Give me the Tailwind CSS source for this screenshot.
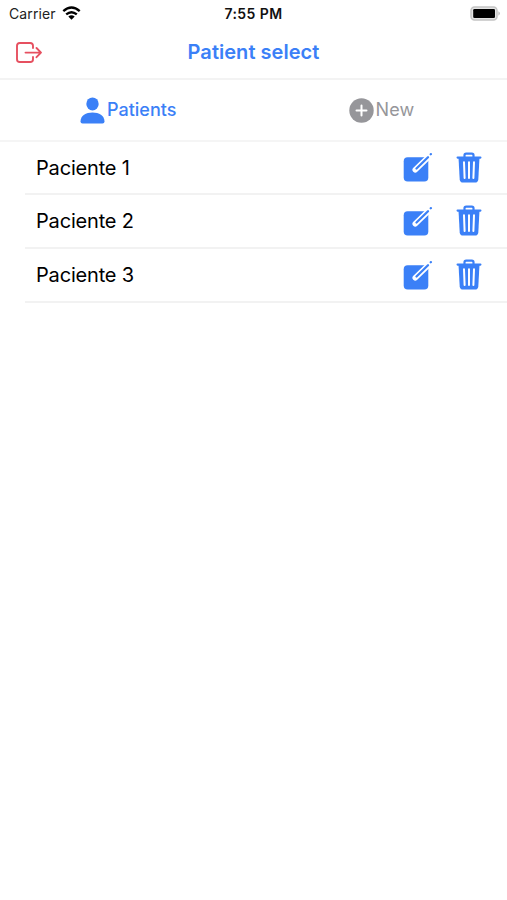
<!DOCTYPE html>
<html lang="en">
<head>
<meta charset="utf-8">
<title>Patient select</title>
<script src="https://cdn.jsdelivr.net/npm/@tailwindcss/browser@4"></script>
</head>
<body class="bg-white text-black font-['Inter',sans-serif] h-[900px] overflow-hidden">
<svg class="hidden">
  <symbol id="edit" viewBox="0 0 30 31">
    <rect x=".7" y="5.2" width="24.6" height="24.3" rx="4" fill="#3b80f7"/>
    <path stroke="#fff" stroke-width="5.6" stroke-linecap="round" fill="none" d="M26 4.5L12.300 17.700"/>
    <path stroke="#3b80f7" stroke-width="2.300" stroke-linecap="round" fill="none" d="M25 5.300L13.500 16.500M27.700 2.300L27.900 2.100"/>
  </symbol>
  <symbol id="trash" viewBox="0 0 26 32">
    <path fill="none" stroke="#3b80f7" stroke-width="2.2" stroke-linecap="round" stroke-linejoin="round" d="M1.6 5.6H24.4M8.500 5V3.300Q8.500 1.600 10.200 1.600H15.800Q17.500 1.600 17.500 3.300V5"/>
    <path fill="#3b80f7" d="M2.500 5.500H23.500L22.300 27.500Q22 30.600 19 30.600H7Q4 30.600 3.700 27.500Z"/>
    <path fill="none" stroke="#fff" stroke-width="2" stroke-linecap="round" d="M8 10.300L8.600 26M13 10.300V26M18 10.300L17.400 26"/>
  </symbol>
</svg>

<div class="grid grid-cols-3 h-[27px] items-center">
  <div class="flex items-center pl-[9px] gap-[6px]">
    <span class="text-[14px] leading-[27px] tracking-[0.1px] text-[#222]">Carrier</span>
    <svg class="w-[19px] h-[14px] -mt-[2px]" viewBox="0 0 19 14" fill="none" stroke="#000" stroke-width="2.4">
      <path d="M1.300 5.200Q9.500 -2 17.700 5.200M4.200 8.400Q9.500 3.900 14.800 8.400"/>
      <path fill="#000" stroke="none" d="M6.300 10.400Q9.500 7.900 12.700 10.400L9.500 13.700Z"/>
    </svg>
  </div>
  <div class="text-center text-[14px] leading-[27px] font-semibold tracking-[0.42px] text-[#111]">7:55 PM</div>
  <div class="flex justify-end pr-[6px]">
    <svg class="w-[31px] h-[15px]" viewBox="0 0 31 15">
      <rect x="1" y="1" width="26" height="13" rx="3.500" fill="#e4e4e4" stroke="#c4c4c4" stroke-width="1.500"/>
      <rect x="3.200" y="3" width="21.800" height="9" rx="1.300" fill="#000"/>
      <path d="M28.500 5.300Q31 7.500 28.500 9.700Z" fill="#aaa"/>
    </svg>
  </div>
</div>

<header class="grid grid-cols-[100px_1fr_100px] items-center h-[53px] border-b-2 border-[#f3f3f3]">
  <svg class="ml-[15px] w-[28px] h-[24px]" viewBox="0 0 28 24" fill="none" stroke="#e65060" stroke-width="1.9" stroke-linecap="round" stroke-linejoin="round">
    <path d="M18 7V4.800Q18 2 15.200 2H4.800Q2 2 2 4.800V18.200Q2 21 4.800 21H15.200Q18 21 18 18.200V16M10.500 11.600H26M21.500 7L26 11.600L21.500 16.200"/>
  </svg>
  <h1 class="text-center text-[20px] leading-[49px] pb-[1px] font-semibold tracking-[0.04px] text-[#3b80f7]">Patient select</h1>
</header>

<nav class="grid grid-cols-2 h-[62px] border-b-2 border-[#f5f5f5]">
  <div class="flex items-center pl-[80px] gap-[2px] text-[#3b80f7]">
    <svg class="w-[25px] h-[27px]" viewBox="0 0 25 27" fill="currentColor">
      <ellipse cx="12.500" cy="6.900" rx="6.200" ry="6.500"/>
      <path d="M.5 24.500C.5 18.500 6 15.500 12.500 15.500S24.500 18.500 24.500 24.500Q24.500 26.600 22.500 26.600H2.500Q.5 26.600 .5 24.500Z"/>
    </svg>
    <span class="text-[18px] leading-[56px] font-medium">Patients</span>
  </div>
  <div class="flex items-center pl-[95px] gap-[2px] text-[#96969a]">
    <svg class="w-[25px] h-[25px]" viewBox="0 0 25 25">
      <circle cx="12.500" cy="12.500" r="12.200" fill="currentColor"/>
      <path d="M12.500 7.500V17.500M7.500 12.500H17.500" stroke="#fff" stroke-width="2" stroke-linecap="round"/>
    </svg>
    <span class="text-[18px] leading-[56px] tracking-[0.1px]">New</span>
  </div>
</nav>

<main>
  <div class="ml-[25px] flex items-center h-[53px] pl-[11px] pr-[25px] border-b-2 border-[#f2f2f2]">
    <span class="flex-1 text-[20px] leading-[50px] tracking-[-0.18px]">Paciente 1</span>
    <svg class="w-[30px] h-[31px] mr-[23px]"><use href="#edit"/></svg>
    <svg class="w-[26px] h-[32px]"><use href="#trash"/></svg>
  </div>
  <div class="ml-[25px] flex items-center h-[54px] pl-[11px] pr-[25px] border-b-2 border-[#f2f2f2]">
    <span class="flex-1 text-[20px] leading-[50px] tracking-[-0.18px]">Paciente 2</span>
    <svg class="w-[30px] h-[31px] mr-[23px]"><use href="#edit"/></svg>
    <svg class="w-[26px] h-[32px]"><use href="#trash"/></svg>
  </div>
  <div class="ml-[25px] flex items-center h-[54px] pl-[11px] pr-[25px] border-b-2 border-[#f2f2f2]">
    <span class="flex-1 text-[20px] leading-[50px] tracking-[-0.18px]">Paciente 3</span>
    <svg class="w-[30px] h-[31px] mr-[23px]"><use href="#edit"/></svg>
    <svg class="w-[26px] h-[32px]"><use href="#trash"/></svg>
  </div>
</main>
</body>
</html>
